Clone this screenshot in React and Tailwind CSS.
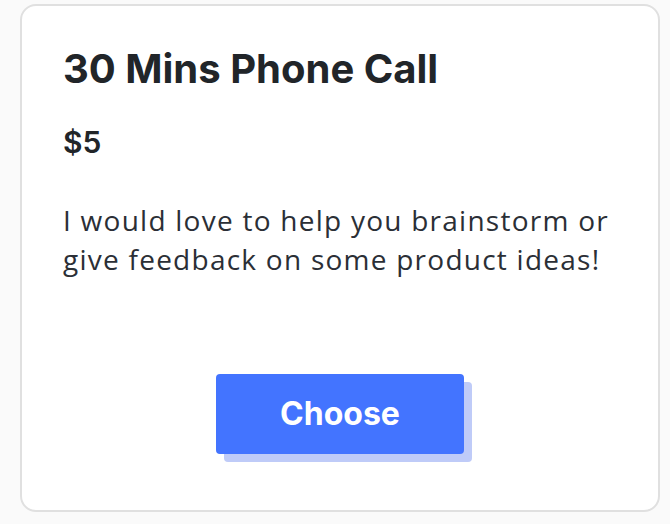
export default function App() {
  return (
    <div className="w-[670px] h-[524px] bg-[#fafafa] pt-[4px] pl-[20px] overflow-hidden">
      <div className="w-[640px] h-[508px] bg-white border-2 border-[#e0e0e0] rounded-2xl pl-[41px] pr-[20px] pt-[43px] flex flex-col">
        <h2 className="font-['Inter',sans-serif] font-bold text-[40px] leading-none text-[#212529]">
          30 Mins Phone Call
        </h2>
        <p className="font-['Inter',sans-serif] font-semibold text-[30px] leading-none text-[#212529] mt-[38px]">
          $5
        </p>
        <p className="font-['Open_Sans',sans-serif] text-[28px] leading-[39px] tracking-[1.25px] text-[#2b2f36] mt-[44px] whitespace-nowrap">
          I would love to help you brainstorm or
          <br />
          give feedback on some product ideas!
        </p>
        <div className="flex justify-center mt-[95px] pr-[21px]">
          <button className="w-[248px] h-[80px] rounded bg-[#4374ff] text-white font-['Inter',sans-serif] font-bold text-[32px] shadow-[8px_8px_0_#bfcbf8]">
            Choose
          </button>
        </div>
      </div>
    </div>
  );
}
